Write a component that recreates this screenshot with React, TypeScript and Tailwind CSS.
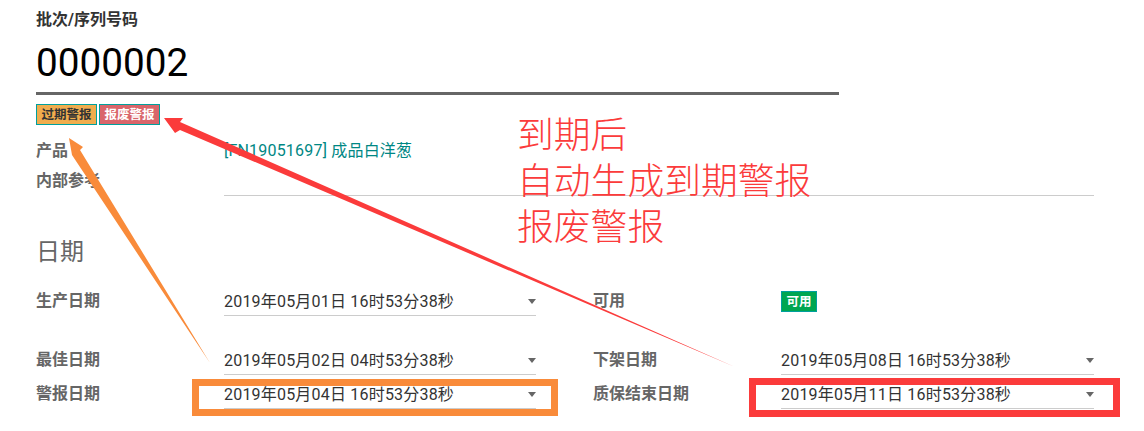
const font = { fontFamily: '"Roboto","Noto Sans CJK SC",sans-serif' };

function DateField({ value }: { value: string }) {
  return (
    <div className="h-[32px] border-b border-[#ccc] flex items-center justify-between pt-[5px] text-[16px] tracking-[0.2px] text-[#333] leading-[20px]">
      <span>{value}</span>
      <span className="mb-[2px] w-0 h-0 border-x-[4.5px] border-x-transparent border-t-[5px] border-t-[#666]" />
    </div>
  );
}

function Label({ children }: { children: string }) {
  return <div className="text-[16px] leading-[20px] font-bold text-[#666] mt-[7px]">{children}</div>;
}

export default function App() {
  return (
    <div className="relative w-[1144px] h-[431px] bg-white overflow-hidden pl-[36px] pt-[10px]" style={font}>
      <div className="text-[16px] leading-[20px] font-bold text-[#333]">批次/序列号码</div>
      <div className="w-[803px] h-[65px] border-b-[3px] border-[#666] text-[38.7px] leading-[65px] text-black">0000002</div>
      <div className="flex gap-[2px] mt-[9px]">
        <span className="h-[21px] w-[61px] border border-[#00a09d] bg-[#f0ad4e] text-[#333] text-[12.5px] leading-[19px] text-center font-bold">过期警报</span>
        <span className="h-[21px] w-[61px] border border-[#00a09d] bg-[#d9656a] text-white text-[12.5px] leading-[19px] text-center font-bold">报废警报</span>
      </div>
      <div className="grid grid-cols-[188px_870px] mt-[16px]">
        <div className="text-[16px] leading-[20px] font-bold text-[#666]">产品</div>
        <div className="text-[16px] leading-[20px] tracking-[0.2px] text-[#008784]">[FN19051697] 成品白洋葱</div>
        <div className="text-[16px] leading-[20px] font-bold text-[#666] mt-[10px]">内部参考</div>
        <div className="h-[35px] border-b border-[#ccc]" />
      </div>
      <div className="text-[24px] leading-[30px] text-[#666] mt-[41px]">日期</div>
      <div className="grid grid-cols-[188px_312px_57px_188px_313px] grid-rows-[32px_27px_34px_34px] mt-[17px] items-start">
        <Label>生产日期</Label>
        <DateField value="2019年05月01日 16时53分38秒" />
        <div />
        <Label>可用</Label>
        <div className="mt-[7px]">
          <span className="block w-[36px] h-[21px] bg-[#00a651] border border-[#00a09d] text-white text-[12.5px] leading-[19px] text-center font-bold">可用</span>
        </div>
        <div className="col-span-5" />
        <Label>最佳日期</Label>
        <DateField value="2019年05月02日 04时53分38秒" />
        <div />
        <Label>下架日期</Label>
        <DateField value="2019年05月08日 16时53分38秒" />
        <Label>警报日期</Label>
        <DateField value="2019年05月04日 16时53分38秒" />
        <div />
        <Label>质保结束日期</Label>
        <DateField value="2019年05月11日 16时53分38秒" />
      </div>

      <svg className="absolute left-0 top-0 pointer-events-none" width="1144" height="431" viewBox="0 0 1144 431">
        <polygon points="164,118 183,118 180,122 735,367 180,130 175,133" fill="#fb3b3b" />
        <polygon points="69,138 83,147 80,150 210,363 72,155" fill="#f98b3a" />
      </svg>
      <div className="absolute left-[192px] top-[379px] w-[366px] h-[37px] border-[7px] border-[#f98b3a]" />
      <div className="absolute left-[749px] top-[378px] w-[371px] h-[39px] border-[7px] border-[#fb3b3b]" />
      <div className="absolute left-[517px] top-[113px] text-[36.8px] leading-[46px] text-[#fb3b3b] font-light">
        <div>到期后</div>
        <div>自动生成到期警报</div>
        <div>报废警报</div>
      </div>
    </div>
  );
}
